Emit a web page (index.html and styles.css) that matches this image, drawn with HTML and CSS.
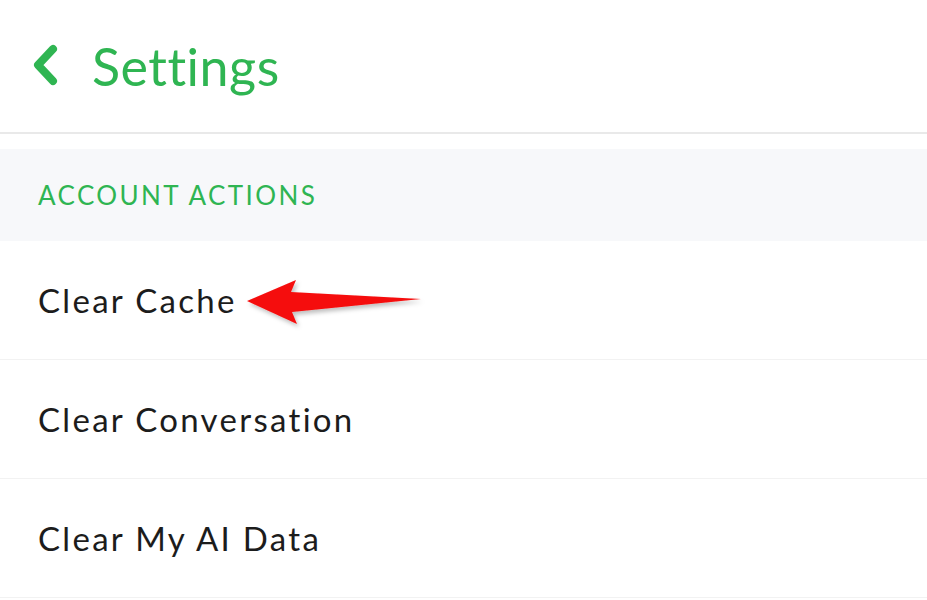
FILE: index.html
```html
<!DOCTYPE html>
<html>
<head>
<meta charset="utf-8">
<link rel="stylesheet" href="styles.css">
</head>
<body>
<div class="page">
  <header class="topbar">
    <svg class="back" width="30" height="44" viewBox="0 0 30 44">
      <polyline points="21,5 6,21 21,37" fill="none" stroke="#2fb552" stroke-width="8" stroke-linecap="round" stroke-linejoin="round"/>
    </svg>
    <h1 class="title">Settings</h1>
  </header>
  <div class="gap"></div>
  <div class="section">ACCOUNT ACTIONS</div>
  <ul class="list">
    <li class="row row-first">Clear Cache
      <svg class="arrow" width="200" height="60" viewBox="0 0 200 60">
        <defs>
          <filter id="sh" x="-20%" y="-50%" width="140%" height="200%">
            <feDropShadow dx="2" dy="3" stdDeviation="2" flood-color="#000" flood-opacity="0.25"/>
          </filter>
        </defs>
        <polygon filter="url(#sh)" fill="#f50d0d" points="7,22 56,1 51,13 181,20 52,33 57,45"/>
      </svg>
    </li>
    <li class="row">Clear Conversation</li>
    <li class="row">Clear My AI Data</li>
  </ul>
</div>
</body>
</html>
```
FILE: styles.css
```css
html, body {
  margin: 0;
  padding: 0;
  background: #ffffff;
}
.page {
  width: 927px;
  height: 600px;
  overflow: hidden;
  font-family: "Lato", "Noto Sans", sans-serif;
}
.topbar {
  height: 132px;
  display: flex;
  align-items: center;
  padding-left: 32px;
  border-bottom: 2px solid #e9e9e9;
  box-sizing: content-box;
}
.back {
  display: block;
  margin-top: -1px;
}
.title {
  margin: 0 0 0 30px;
  font-size: 52px;
  font-weight: 400;
  color: #2fb552;
  letter-spacing: 0.5px;
}
.gap {
  height: 15px;
}
.section {
  height: 92px;
  background: #f7f8fa;
  display: flex;
  align-items: center;
  padding-left: 38px;
  font-size: 26px;
  color: #2fb552;
  letter-spacing: 2.4px;
}
.list {
  list-style: none;
  margin: 0;
  padding: 0;
}
.row {
  height: 118px;
  border-bottom: 1px solid #f2f2f2;
  display: flex;
  align-items: center;
  padding-left: 38px;
  font-size: 33px;
  color: #1c1c1c;
  letter-spacing: 2.3px;
  position: relative;
}
.arrow {
  position: absolute;
  left: 240px;
  top: 38px;
}
```
